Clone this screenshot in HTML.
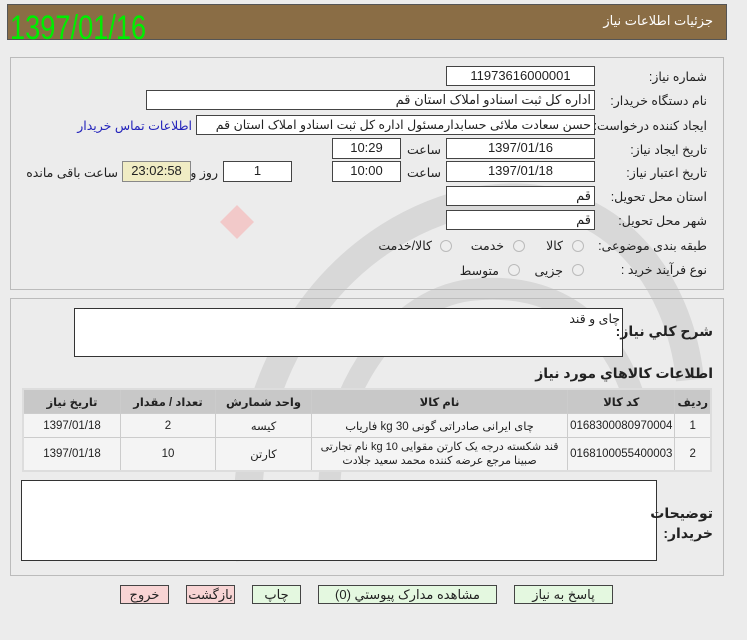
<!DOCTYPE html>
<html><head><meta charset="utf-8"><style>
body{margin:0;width:747px;height:640px;background:#ececec;font-family:"Liberation Sans","DejaVu Sans",sans-serif;font-size:12px;color:#222;position:relative;overflow:hidden}
.a{position:absolute}
.hdr{left:7px;top:4px;width:720px;height:36px;background:#8a6d45;border:1px solid #555;box-sizing:border-box}
.pn{border:1px solid #bbb;box-sizing:border-box;background:transparent}
.in{position:absolute;background:#fff;border:1px solid #444;box-sizing:border-box;height:20px;line-height:18px;text-align:center;font-size:13px}
.r{text-align:right;padding-right:3px}
.lb{position:absolute;direction:rtl;text-align:right;white-space:nowrap;font-size:12.5px}
table{border-collapse:collapse;font-size:11.5px;direction:rtl}
td,th{border:1px solid #ccc;text-align:center;padding:0 2px}
th{background:#c8c8c8;font-weight:bold;height:23px}
td{background:#f4f4f4}
.bt{position:absolute;top:585px;height:19px;border:1px solid #444;box-sizing:border-box;text-align:center;line-height:17px;font-size:13px}
.rd{position:absolute;width:10px;height:10px;border-radius:50%;border:1px solid #bbb;background:#eee}
</style></head><body>
<svg class="a" style="left:0;top:0" width="747" height="640">
<path d="M250 560 C 230 380 330 230 480 200 C 610 180 680 280 690 380" stroke="#d8d8d8" stroke-width="28" fill="none"/>
<path d="M330 520 C 320 400 390 300 470 290 C 560 280 620 330 640 420" stroke="#d8d8d8" stroke-width="22" fill="none"/>
<rect x="225" y="210" width="24" height="24" fill="#f2c9c9" transform="rotate(45 237 222)"/>
</svg>
<div class="a hdr"></div>
<div class="lb" style="right:34px;top:13px;color:#fff;font-size:13px">جزئیات اطلاعات نیاز</div>
<div class="a" style="left:10px;top:9px;color:#00ee00;font-size:34px;transform:scaleX(0.8);transform-origin:left top;white-space:nowrap">1397/01/16</div>

<div class="a pn" style="left:10px;top:57px;width:714px;height:233px"></div>
<div class="lb" style="right:40px;top:69px">شماره نیاز:</div>
<div class="in" style="left:446px;top:66px;width:149px">11973616000001</div>
<div class="lb" style="right:40px;top:93px">نام دستگاه خریدار:</div>
<div class="in r" style="left:146px;top:90px;width:449px;direction:rtl">اداره کل ثبت اسنادو املاک استان قم</div>
<div class="lb" style="right:40px;top:118px">ایجاد کننده درخواست:</div>
<div class="in r" style="left:196px;top:115px;width:399px;direction:rtl;overflow:hidden;white-space:nowrap;font-size:12.5px">حسن سعادت ملائی حسابدارمسئول اداره کل ثبت اسنادو املاک استان قم</div>
<div class="lb" style="right:555px;top:118px;color:#2222bb">اطلاعات تماس خریدار</div>
<div class="lb" style="right:40px;top:142px">تاریخ ایجاد نیاز:</div>
<div class="in" style="left:446px;top:138px;width:149px;height:21px">1397/01/16</div>
<div class="lb" style="right:306px;top:142px">ساعت</div>
<div class="in" style="left:332px;top:138px;width:69px;height:21px">10:29</div>
<div class="lb" style="right:40px;top:165px">تاریخ اعتبار نیاز:</div>
<div class="in" style="left:446px;top:161px;width:149px;height:21px">1397/01/18</div>
<div class="lb" style="right:306px;top:165px">ساعت</div>
<div class="in" style="left:332px;top:161px;width:69px;height:21px">10:00</div>
<div class="in" style="left:223px;top:161px;width:69px;height:21px">1</div>
<div class="lb" style="right:529px;top:165px">روز و</div>
<div class="in" style="left:122px;top:161px;width:69px;height:21px;background:#f0ecc4;border-color:#888">23:02:58</div>
<div class="lb" style="right:629px;top:165px">ساعت باقی مانده</div>
<div class="lb" style="right:40px;top:189px">استان محل تحویل:</div>
<div class="in r" style="left:446px;top:186px;width:149px">قم</div>
<div class="lb" style="right:40px;top:213px">شهر محل تحویل:</div>
<div class="in r" style="left:446px;top:210px;width:149px">قم</div>
<div class="lb" style="right:40px;top:238px">طبقه بندی موضوعی:</div>
<div class="rd" style="left:572px;top:240px"></div><div class="lb" style="right:184px;top:238px">کالا</div>
<div class="rd" style="left:513px;top:240px"></div><div class="lb" style="right:243px;top:238px">خدمت</div>
<div class="rd" style="left:440px;top:240px"></div><div class="lb" style="right:315px;top:238px">کالا/خدمت</div>
<div class="lb" style="right:40px;top:262px">نوع فرآیند خرید :</div>
<div class="rd" style="left:572px;top:264px"></div><div class="lb" style="right:184px;top:263px">جزیی</div>
<div class="rd" style="left:508px;top:264px"></div><div class="lb" style="right:248px;top:263px">متوسط</div>

<div class="a pn" style="left:10px;top:298px;width:714px;height:278px"></div>
<div class="a" style="left:74px;top:308px;width:549px;height:49px;background:#fff;border:1px solid #333;box-sizing:border-box"></div>
<div class="lb" style="right:127px;top:311px">چاى و قند</div>
<div class="lb" style="right:34px;top:323px;font-weight:bold;font-size:14px">شرح کلي نياز:</div>
<div class="lb" style="right:34px;top:365px;font-weight:bold;font-size:14px">اطلاعات کالاهاي مورد نياز</div>
<table class="a" style="left:22px;top:388px;width:690px;border:2px solid #ddd">
<tr><th style="width:24px">رديف</th><th style="width:98px">کد کالا</th><th>نام کالا</th><th style="width:91px">واحد شمارش</th><th style="width:90px">تعداد / مقدار</th><th style="width:92px">تاريخ نياز</th></tr>
<tr style="height:24px"><td>1</td><td>0168300080970004</td><td>چاى ايرانى صادراتى گونى 30 kg فاریاب</td><td>کيسه</td><td>2</td><td>1397/01/18</td></tr>
<tr style="height:33px"><td>2</td><td>0168100055400003</td><td style="line-height:14px;font-size:11px">قند شکسته درجه يک کارتن مقوايى 10 kg نام تجارتى<br>صبينا مرجع عرضه کننده محمد سعيد جلادت</td><td>کارتن</td><td>10</td><td>1397/01/18</td></tr>
</table>
<div class="a" style="left:21px;top:480px;width:636px;height:81px;background:#fff;border:1px solid #333;box-sizing:border-box"></div>
<div class="lb" style="right:34px;top:503px;font-weight:bold;font-size:14px;line-height:20px">توضيحات<br>خريدار:</div>

<div class="bt" style="left:120px;width:49px;background:#f8d4d4">خروج</div>
<div class="bt" style="left:186px;width:49px;background:#f8d4d4">بازگشت</div>
<div class="bt" style="left:252px;width:49px;background:#e4f8e0">چاپ</div>
<div class="bt" style="left:318px;width:179px;background:#e4f8e0">مشاهده مدارک پيوستي (0)</div>
<div class="bt" style="left:514px;width:99px;background:#e4f8e0">پاسخ به نياز</div>
</body></html>
